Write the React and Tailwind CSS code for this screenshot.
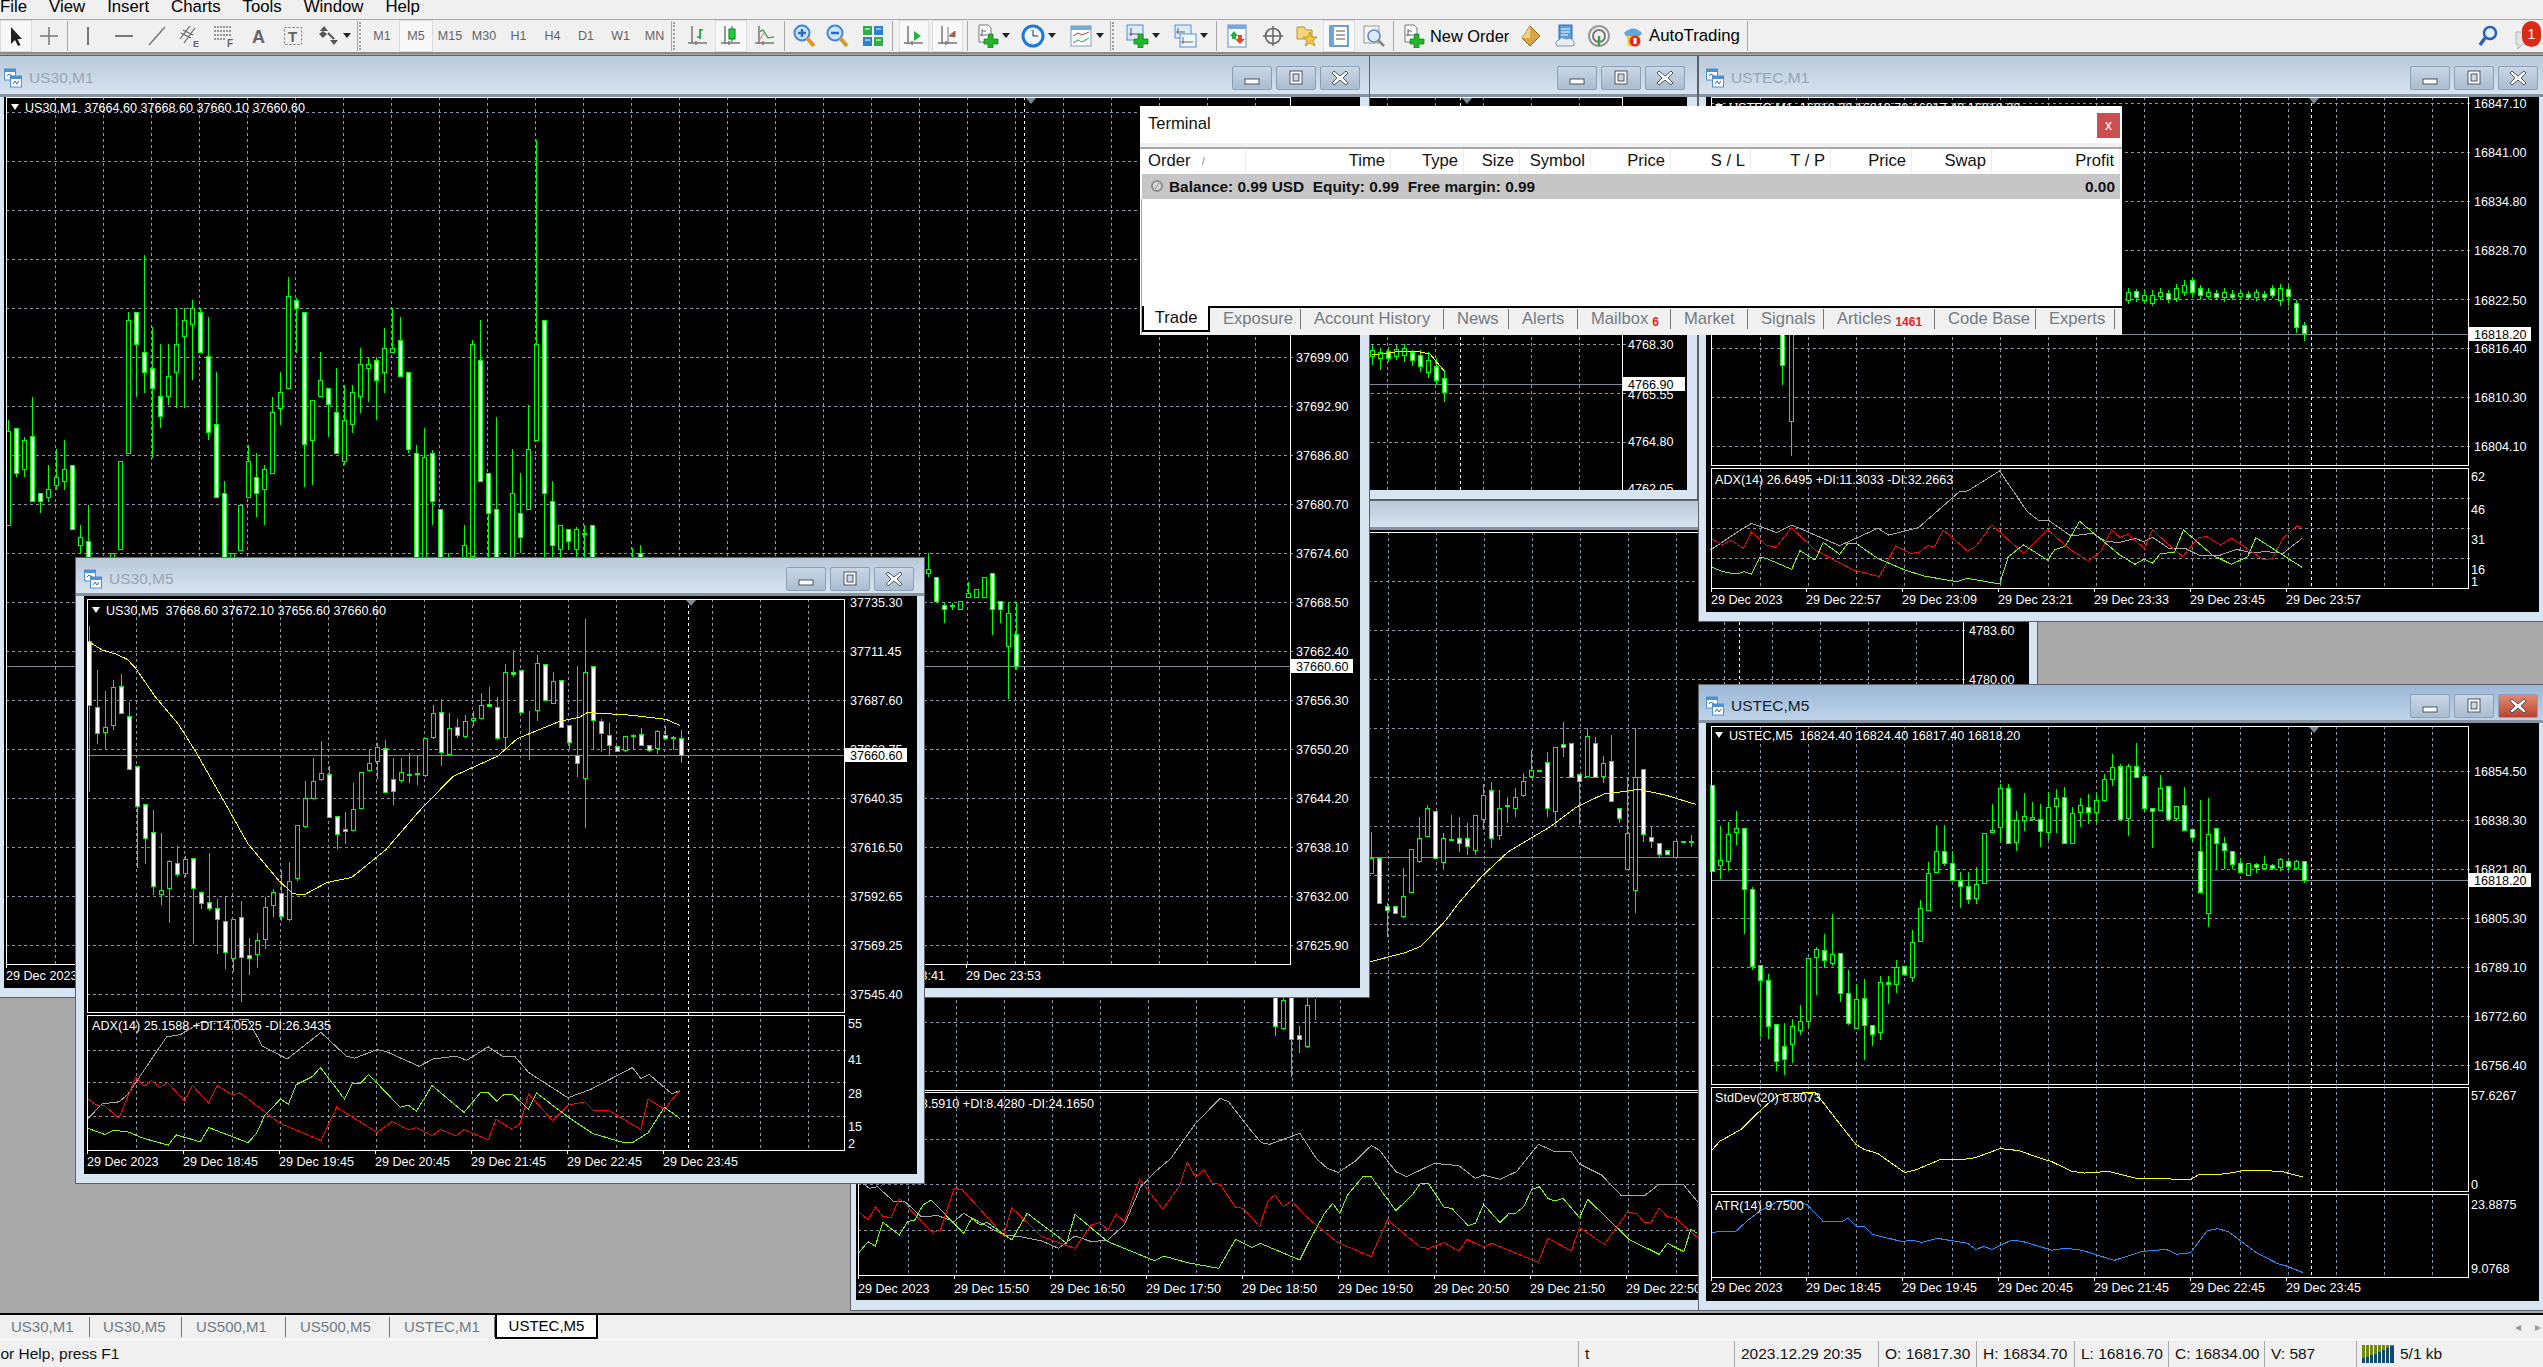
import React from 'react';

const parsePts = (s, ox, oy, fx, fy) =>
  s.split(' ').map((p) => {
    const [a, b] = p.split(',');
    return `${ox + a / fx},${oy + b / fy}`;
  }).join(' ');

function Candles({ data, x0, oy, fy, step = 8 }) {
  return data.split(' ').map((c, i) => {
    if (c === '-') return null;
    const [t, b, h, l] = c.slice(1).split(',').map((v) => oy + v / fy);
    const x = Math.round(x0 + i * step);
    return (
      <g key={i} shapeRendering="crispEdges">
        <line x1={x + 0.5} x2={x + 0.5} y1={h} y2={l} stroke="#00ff00" />
        {c[0] !== 'l' && (
          <rect x={x - 1.5} y={t} width={4} height={Math.max(b - t, 1)} stroke="#00ff00" fill={c[0] === 'w' ? '#ffffff' : '#000000'} />
        )}
      </g>
    );
  });
}

const Line = ({ pts, color }) => <polyline points={pts} fill="none" stroke={color} strokeWidth="1" shapeRendering="crispEdges" />;

function Label({ x, y, children, black }) {
  return (
    <text x={x} y={y + 4.5} className={`whitespace-pre text-[12.6px] ${black ? 'fill-black' : 'fill-white'}`}>
      {children}
    </text>
  );
}

function Chart({ box, left, right, panes, vx, hs, shift, tri, current, prices = [], times = [], timeY, notes = [], head, children }) {
  const [bx, by, bw, bh] = box;
  const top = panes[0][0];
  const bottom = panes[panes.length - 1][1];
  const xs = [];
  for (let x = vx; x < right; x += 48) xs.push(Math.round(x) + 0.5);
  return (
    <svg width={bw} height={bh} viewBox={`${bx} ${by} ${bw} ${bh}`} className="block shrink-0 bg-black">
      <g shapeRendering="crispEdges" stroke="#8c97a5" strokeDasharray="3 3">
        {xs.map((x) => <line key={x} x1={x} x2={x} y1={top} y2={bottom} />)}
        {hs.map((y) => <line key={y} x1={left} x2={right + 5} y1={y + 0.5} y2={y + 0.5} />)}
      </g>
      <line x1={shift + 0.5} x2={shift + 0.5} y1={top} y2={bottom} stroke="#ffffff" strokeDasharray="3 3" shapeRendering="crispEdges" />
      {current && <line x1={left} x2={right} y1={current[0] + 0.5} y2={current[0] + 0.5} stroke="#7c8894" shapeRendering="crispEdges" />}
      {children}
      <g shapeRendering="crispEdges" fill="none" stroke="#ffffff">
        {panes.map(([t, b]) => <rect key={t} x={left + 0.5} y={t + 0.5} width={right - left} height={b - t} />)}
        {times.map(([x]) => <line key={x} x1={x + 0.5} x2={x + 0.5} y1={bottom} y2={bottom + 4} />)}
      </g>
      {tri && <polygon points={`${tri - 5},${top + 1} ${tri + 5},${top + 1} ${tri},${top + 7}`} fill="#7c8894" />}
      {head && <polygon points={`${head[0] - 14},${head[1] - 3} ${head[0] - 6},${head[1] - 3} ${head[0] - 10},${head[1] + 3}`} fill="#ffffff" />}
      {head && <Label x={head[0]} y={head[1]}>{head[2]}</Label>}
      {notes.map(([x, y, t]) => <Label key={t} x={x} y={y}>{t}</Label>)}
      {prices.map(([y, t, x]) => <Label key={t} x={x || right + 6} y={y}>{t}</Label>)}
      {times.map(([x, t]) => <Label key={t} x={x} y={timeY}>{t}</Label>)}
      {current && current[1] && (
        <g>
          <rect x={right + 1} y={current[0] - 7} width={62} height={14} fill="#ffffff" />
          <Label x={right + 6} y={current[0]} black>{current[1]}</Label>
        </g>
      )}
    </svg>
  );
}

function WinBtn({ kind, hot }) {
  return (
    <div className={`flex h-[24px] w-[40px] items-center justify-center rounded-[2px] border border-[#8ba1b8] ${hot ? 'bg-gradient-to-b from-[#e08a72] to-[#b8432f]' : 'bg-gradient-to-b from-[#c9d7e6] to-[#aabcd0]'}`}>
      <svg width="20" height="16" viewBox="0 0 20 16">
        {kind === 'min' && <rect x="3" y="9" width="14" height="5" fill="#ffffff" stroke="#4a5560" />}
        {kind === 'max' && <g fill="none" stroke="#4a5560"><rect x="4" y="1" width="12" height="13" fill="#ffffff" /><rect x="7" y="4" width="6" height="7" fill="#c9d7e6" /></g>}
        {kind === 'close' && <path d="M4 1 L10 6 L16 1 L18 3 L13 8 L18 13 L16 15 L10 10 L4 15 L2 13 L7 8 L2 3 Z" fill="#ffffff" stroke="#4a5560" />}
      </svg>
    </div>
  );
}

function ChartIcon() {
  return (
    <svg width="18" height="20" viewBox="0 0 18 20" className="shrink-0">
      <rect x="0.5" y="1" width="11" height="11" fill="#ffffff" stroke="#4f8fd6" />
      <rect x="0.5" y="1" width="11" height="3" fill="#4f8fd6" />
      <rect x="6.5" y="8" width="11" height="11" fill="#ffffff" stroke="#4f8fd6" />
      <rect x="6.5" y="8" width="11" height="3" fill="#4f8fd6" />
      <path d="M3 8 L5 6 L8 8 M9 16 L11 13 L13 16 L15 13" fill="none" stroke="#3568a8" />
    </svg>
  );
}

function Win({ pos, title, titleH, pad, btn = 'mr-[5px]', active, children }) {
  return (
    <div className={`absolute flex flex-col border border-[#5c6068] bg-[#d7e4f1] ${pos}`}>
      <div className={`flex shrink-0 items-center justify-between border-b-[3px] border-[#8592a0] ${titleH} ${active ? 'bg-gradient-to-b from-[#9cb8d6] to-[#bdd3e9]' : 'bg-gradient-to-b from-[#b9c9d9] to-[#d7e3ef]'}`}>
        <div className={`flex items-center gap-[7px] text-[15.5px] ${pad} ${active ? 'text-[#14202c]' : 'text-[#98a6b4]'}`}>
          <ChartIcon />
          {title}
        </div>
        <div className={`flex gap-[4px] ${btn}`}>
          <WinBtn kind="min" />
          <WinBtn kind="max" />
          <WinBtn kind="close" hot={active} />
        </div>
      </div>
      <div className={pad}>{children}</div>
    </div>
  );
}

const Dd = () => <svg width="8" height="6" viewBox="0 0 8 6" className="shrink-0"><path d="M0 0 H8 L4 5 Z" fill="#222" /></svg>;
const Ico = ({ children }) => <svg width="24" height="24" viewBox="0 0 24 24" className="shrink-0">{children}</svg>;
const Axes = () => <path d="M6 2 V20 M2 19 H21 M10 17 V21" fill="none" stroke="#777" strokeWidth="1.5" />;
const Plus = () => <path d="M13 10 H18 V15 H23 V20 H18 V24 H13 V20 H9 V15 H13 Z" fill="#22b52c" stroke="#137a1a" strokeWidth="0.7" />;
const DocPlus = () => (
  <Ico>
    <path d="M4 1 H13 L16 4 V18 H4 Z" fill="#fff" stroke="#777" />
    <path d="M7 5 V12 M5 11 H12 M7 7 H11" stroke="#666" fill="none" />
    <Plus />
  </Ico>
);
const Glass = ({ plus }) => (
  <Ico>
    <circle cx="10" cy="9" r="7.5" fill="#cfe4f8" stroke="#3d86d8" strokeWidth="2" />
    <path d={plus ? 'M6 9 H14 M10 5 V13' : 'M6 9 H14'} stroke="#2a6cc0" strokeWidth="2.5" />
    <path d="M15 14 L22 22" stroke="#d99a2b" strokeWidth="4" />
  </Ico>
);

function Tool({ w, on, children }) {
  return (
    <div className={`flex h-[32px] shrink-0 items-center justify-center gap-[3px] ${w} ${on ? 'border border-[#dcdcdc] bg-[#f8f8f8]' : ''}`}>
      {children}
    </div>
  );
}
const Sep = ({ cls = '' }) => <div className={`h-[30px] w-[2px] shrink-0 border-l border-[#a8a8a8] ${cls}`} />;
const Grip = ({ w }) => <div className={`h-[28px] shrink-0 border-l-2 border-dotted border-[#a0a0a0] ${w}`} />;
const Tf = ({ w, on, children }) => <Tool w={w} on={on}><span className="text-[12.5px] text-[#666]">{children}</span></Tool>;

function Toolbar() {
  return (
    <div className="flex h-[35px] shrink-0 items-center border-y border-b-2 border-t-[#a8a8a8] border-b-[#8a8a8a] bg-[#f0f0f0] text-[16.4px] text-black">
      <Tool w="w-[32px]" on><Ico><path d="M7 3 V20 L11 16 L14 22 L16.5 21 L13.5 15 L18 15 Z" fill="#222" /></Ico></Tool>
      <Tool w="w-[34px]"><Ico><path d="M12 3 V21 M3 12 H21" stroke="#777" strokeWidth="1.5" /></Ico></Tool>
      <Sep cls="mx-px" />
      <Tool w="w-[36px]"><Ico><path d="M12 3 V21" stroke="#777" strokeWidth="2" /></Ico></Tool>
      <Tool w="w-[35px]"><Ico><path d="M3 12 H21" stroke="#777" strokeWidth="2" /></Ico></Tool>
      <Tool w="w-[32px]"><Ico><path d="M4 21 L20 3" stroke="#777" strokeWidth="1.5" /></Ico></Tool>
      <Tool w="w-[34px]"><Ico><path d="M2 15 L12 2 M6 19 L17 4 M3 9 L13 14 M5 6 L15 11" stroke="#666" strokeWidth="1.2" /><text x="15" y="23" className="text-[9px] font-bold fill-[#666]">E</text></Ico></Tool>
      <Tool w="w-[34px]"><Ico><path d="M2 3 H19 M2 7 H19 M2 11 H19 M2 15 H14" stroke="#777" strokeWidth="1.3" strokeDasharray="2 1" /><text x="15" y="23" className="text-[10px] font-bold fill-[#666]">F</text></Ico></Tool>
      <Tool w="w-[35px]"><Ico><text x="5" y="19" className="text-[18px] font-bold fill-[#666]">A</text></Ico></Tool>
      <Tool w="w-[34px]"><Ico><rect x="3.5" y="3.5" width="17" height="17" fill="none" stroke="#777" strokeDasharray="2 2" /><text x="7" y="18" className="text-[15px] font-bold fill-[#666]">T</text></Ico></Tool>
      <Tool w="w-[47px]"><Ico><path d="M8 2 L12 7 H4 Z M14 16 L18 21 L22 16 Z M3 10 L7 14 L11 10 L7 7 Z" fill="#555" /><path d="M12 9 L18 15" stroke="#555" strokeWidth="2" /></Ico><Dd /></Tool>
      <Sep />
      <Grip w="w-[6px]" />
      <Tf w="w-[34px]">M1</Tf>
      <Tf w="w-[34px]" on>M5</Tf>
      <Tf w="w-[34px]">M15</Tf>
      <Tf w="w-[34px]">M30</Tf>
      <Tf w="w-[35px]">H1</Tf>
      <Tf w="w-[33px]">H4</Tf>
      <Tf w="w-[34px]">D1</Tf>
      <Tf w="w-[35px]">W1</Tf>
      <Tf w="w-[33px]">MN</Tf>
      <Sep />
      <Grip w="w-[8px]" />
      <Tool w="w-[34px]"><Ico><Axes /><path d="M14 5 V15 M11 13 H14 M14 6 H17" stroke="#12a82a" strokeWidth="1.7" fill="none" /></Ico></Tool>
      <Tool w="w-[32px]" on><Ico><Axes /><path d="M13 2 V18" stroke="#0b7d1e" /><rect x="10" y="5" width="6" height="10" fill="#1fd03a" stroke="#0b7d1e" /></Ico></Tool>
      <Tool w="w-[36px]"><Ico><Axes /><path d="M6 8 L10 6 L15 14 L21 13" stroke="#5aa55a" strokeWidth="1.5" fill="none" /><path d="M7 15 L11 9" stroke="#c86a50" /></Ico></Tool>
      <Sep cls="mx-px" />
      <Tool w="w-[34px]"><Glass plus /></Tool>
      <Tool w="w-[32px]"><Glass /></Tool>
      <Tool w="w-[39px]"><Ico><rect x="2" y="2" width="9" height="9" fill="#2fae4a" /><rect x="13" y="2" width="9" height="9" fill="#2d7fd0" /><rect x="2" y="13" width="9" height="9" fill="#2d7fd0" /><rect x="13" y="13" width="9" height="9" fill="#2fae4a" /><path d="M4 5 H9 M15 5 H20 M4 16 H9 M15 16 H20" stroke="#fff" /></Ico></Tool>
      <Sep cls="mr-[5px]" />
      <Tool w="w-[30px]" on><Ico><Axes /><path d="M12 7 L19 12 L12 17 Z" fill="#2cae3c" /></Ico></Tool>
      <div className="w-[3px] shrink-0" />
      <Tool w="w-[31px]" on><Ico><Axes /><path d="M12 3 V20 M19 7 L13 12 L19 13 Z" stroke="#777" fill="#d2491f" strokeWidth="1" /></Ico></Tool>
      <Sep cls="ml-[4px]" />
      <Tool w="w-[46px]"><DocPlus /><Dd /></Tool>
      <Tool w="w-[47px]"><Ico><circle cx="12" cy="12" r="10" fill="#eef6ff" stroke="#1f79d0" strokeWidth="3" /><path d="M12 6 V12 H17" stroke="#333" fill="none" /></Ico><Dd /></Tool>
      <Tool w="w-[48px]"><Ico><rect x="2" y="2" width="20" height="20" fill="#fff" stroke="#7b9cc0" /><rect x="2" y="2" width="20" height="4" fill="#7aa7d8" /><path d="M4 12 L9 9 L13 11 L20 8" stroke="#c03c28" fill="none" /><path d="M4 19 L9 16 L13 18 L20 14" stroke="#2aa53a" fill="none" /></Ico><Dd /></Tool>
      <Sep />
      <Grip w="w-[8px]" />
      <Tool w="w-[45px]"><Ico><rect x="2" y="1" width="16" height="15" fill="#dceafa" stroke="#4f8fd6" /><path d="M6 4 V12 M4 10 H14" stroke="#555" /><Plus /></Ico><Dd /></Tool>
      <Tool w="w-[51px]"><Ico><rect x="2" y="1" width="16" height="13" fill="#dceafa" stroke="#4f8fd6" /><rect x="7" y="10" width="16" height="13" fill="#f2f7fd" stroke="#4f8fd6" /><path d="M5 4 V10 M3 8 H12 M10 13 V20 M8 18 H20" stroke="#666" /></Ico><Dd /></Tool>
      <Sep />
      <Tool w="w-[37px]"><Ico><rect x="3" y="1" width="18" height="22" fill="#fff" stroke="#8fb3da" strokeWidth="1.5" /><rect x="3" y="1" width="18" height="4" fill="#7aa7d8" /><path d="M9 7 L13 12 H11 V15 H7 V12 H5 Z" fill="#1fae36" /><path d="M15 20 L20 15 H17 V11 H13 V15 H10 Z" fill="#de4a24" /></Ico></Tool>
      <Tool w="w-[35px]"><Ico><circle cx="12" cy="12" r="7.5" fill="none" stroke="#666" strokeWidth="1.7" /><path d="M12 2 V22 M2 12 H22" stroke="#666" strokeWidth="1.5" /></Ico></Tool>
      <Tool w="w-[33px]"><Ico><path d="M2 3 H9 L11 6 H17 V15 H2 Z" fill="#f6d676" stroke="#b89236" /><path d="M15 8 L17 13 L22 13 L18 16.5 L20 22 L15 19 L10 22 L12 16.5 L8 13 L13 13 Z" fill="#f2c93a" stroke="#a9892a" strokeWidth="0.8" /></Ico></Tool>
      <Tool w="w-[32px]" on><Ico><rect x="3" y="2" width="18" height="20" fill="#fff" stroke="#3d80c8" strokeWidth="1.5" /><rect x="3" y="2" width="4" height="20" fill="#6ea5dd" /><path d="M9 7 H18 M9 11 H18 M9 15 H18" stroke="#555" /></Ico></Tool>
      <Tool w="w-[38px]"><Ico><rect x="2" y="2" width="15" height="17" fill="#f3f3f3" stroke="#999" /><circle cx="12" cy="12" r="6" fill="#dceafa" stroke="#5d8dc4" strokeWidth="1.7" /><path d="M16 16 L22 22" stroke="#888" strokeWidth="2.5" /></Ico></Tool>
      <Sep />
      <Tool w="w-[35px]"><DocPlus /></Tool>
      <div className="w-[82px] shrink-0 whitespace-nowrap">New Order</div>
      <Tool w="w-[36px]"><Ico><path d="M12 2 L22 12 L12 22 L4 14 Z" fill="#d7a544" stroke="#8a6418" /><path d="M12 2 L4 14 L12 14 Z" fill="#f1cf85" /></Ico></Tool>
      <Tool w="w-[34px]"><Ico><rect x="6" y="1" width="13" height="15" fill="#5b9be0" stroke="#2c6bb4" /><path d="M8 5 H17 M8 8 H17 M8 11 H15" stroke="#fff" /><path d="M4 22 Q1 17 6 16 Q8 12 13 15 Q20 13 21 19 Q22 22 19 22 Z" fill="#e8eef5" stroke="#8795a5" /></Ico></Tool>
      <Tool w="w-[34px]"><Ico><circle cx="12" cy="12" r="10" fill="none" stroke="#999" strokeWidth="2" /><circle cx="12" cy="12" r="6" fill="none" stroke="#777" strokeWidth="2" /><path d="M12 12 V22" stroke="#2cae3c" strokeWidth="2.5" /></Ico></Tool>
      <Tool w="w-[33px]"><Ico><path d="M3 9 Q12 0 21 9 L19 12 H5 Z" fill="#5fa8dd" /><path d="M6 12 H18 L17 22 H7 Z" fill="#f2c93a" /><circle cx="14" cy="17" r="5.5" fill="#e02b1c" /><rect x="12.5" y="14" width="3" height="6" fill="#fff" /></Ico></Tool>
      <div className="w-[98px] shrink-0 whitespace-nowrap text-[16.8px]">AutoTrading</div>
      <Sep />
      <div className="flex-1" />
      <svg width="22" height="24" viewBox="0 0 22 24"><circle cx="13" cy="9" r="6" fill="#e6f0fb" stroke="#2a62b8" strokeWidth="2.5" /><path d="M8 14 L3 21" stroke="#2a62b8" strokeWidth="3.5" /></svg>
      <div className="relative ml-[14px] mr-[2px] h-[30px] w-[28px]">
        <svg width="22" height="22" viewBox="0 0 22 22" className="absolute bottom-0 left-0"><path d="M3 3 H19 V15 H10 L5 20 V15 H3 Z" fill="#e4e4e4" stroke="#b5b5b5" /></svg>
        <div className="absolute right-0 top-0 flex h-[26px] w-[19px] items-center justify-center rounded-full bg-[#d92a14] text-[14px] text-white">1</div>
      </div>
    </div>
  );
}

const CANDLES_A =
  'h995,1275,960,1275 w985,1120,985,1130 h1020,1108,1010,1130 w1010,1205,890,1205 w1180,1205,1180,1240 h1168,1192,1095,1205 h1132,1156,1048,1170 h1108,1144,1020,1170 w1097,1288,1097,1290 h1312,1336,1275,1360 w1324,1400,1215,1400 - - h1360,1400,1360,1400 h1085,1348,1085,1348 h660,1060,636,1060 w636,733,636,890 w757,817,465,880 w805,865,680,1075 w889,949,732,985 h829,889,732,915 h733,817,625,925 h661,709,625,925 h625,673,600,840 w637,757,625,757 w769,997,650,1020 w973,1192,815,1192 w1180,1400,1143,1400 h1360,1400,1360,1400 h1215,1350,1215,1350 h1084,1192,1035,1192 w1132,1180,1060,1250 h1108,1168,1095,1275 h937,1120,890,1120 h877,925,815,975 h589,865,530,865 w601,625,595,760 w637,1033,637,1160 h901,1021,901,1155 h841,889,755,890 w865,913,865,1010 w937,1060,805,1060 h961,1084,855,1095 h877,973,855,1000 h793,889,745,940 h793,805,775,905 w781,841,770,960 h745,817,685,880 h745,757,625,760 w721,829,650,830 w817,1048,817,1060 w1060,1400,1035,1400 h1072,1400,985,1400 w1060,1205,1050,1275 w1228,1400,1228,1400 l0,0,1360,1400 - h1336,1400,1275,1400 h733,1370,720,1400 w781,1145,660,1145 w1120,1240,1120,1370 w1228,1400,950,1400 - h1180,1400,1048,1400 w1240,1312,1120,1360 h1048,1228,915,1228 h733,1021,120,1021 w660,1180,660,1400 w1204,1336,1143,1370 h1276,1348,1276,1400 w1288,1324,1288,1350 h1288,1348,1280,1400 w1300,1302,1275,1400 w1276,1400,1276,1400 - - - - l0,0,1345,1370 w1360,1400,1335,1400';
const CANDLES_A2 = 'h88,100,40,110 w112,185,112,190 w196,208,185,250 w196,198,190,210 h185,208,185,210 h160,172,125,175 h148,172,148,175 h112,172,112,175 w100,208,100,285 w185,208,185,250 h220,320,185,478 w284,380,185,390';

const CANDLES_F =
  'w225,380,185,592 w385,450,295,475 h435,447,345,490 h337,430,318,440 w335,400,305,400 w408,537,372,540 w530,628,530,780 w623,706,623,770 w692,824,637,845 h835,845,693,870 h762,830,760,915 w768,796,725,800 h758,792,750,800 w756,830,756,965 w838,865,835,880 w863,878,742,885 w878,905,855,990 w910,985,850,1027 h905,1000,905,1035 w900,998,860,1108 w993,1002,950,1042 h956,990,938,1025 h876,955,850,977 h838,871,830,900 w842,898,783,910 h813,905,765,910 h675,805,675,810 h610,678,567,680 h567,608,510,610 h547,563,468,567 w550,655,530,655 w653,698,653,733 w685,690,642,720 h636,686,570,688 h545,633,545,633 h523,540,490,545 h485,518,472,560 w487,593,465,595 w562,592,510,625 h545,565,510,570 h550,552,497,570 h548,550,505,575 h462,552,462,555 h400,460,380,462 w398,497,365,530 h437,500,400,502 w435,455,415,460 h420,457,405,460 h414,418,395,430 h381,412,350,415 w378,383,335,385 w387,462,360,465 h300,460,280,487 w300,305,245,310 w295,397,295,400 l0,0,395,515 h278,393,258,420 w280,368,280,370 h322,375,300,376 w320,435,320,435 w430,472,430,487 w503,523,285,555 h300,560,170,680 w285,418,285,490 w420,450,415,495 w455,480,425,505 w482,493,480,495 h458,492,455,495 w454,458,452,490 w452,478,437,480 w480,490,478,495 h445,487,442,500 w455,462,430,465 w459,463,455,490 w462,503,442,522';

const CANDLES_E =
  'w258,468,258,468 h441,455,358,488 h378,445,347,467 h363,374,321,404 w365,513,365,622 w514,703,507,710 w700,735,698,875 w735,848,720,880 w845,935,845,958 w898,930,840,968 h848,893,830,938 h836,858,797,870 h682,836,680,850 h660,680,655,772 w662,687,622,705 h672,695,573,700 w670,768,670,790 w768,842,710,845 h782,853,745,855 w780,846,733,932 w846,868,846,897 h740,863,725,882 w740,745,725,795 h704,745,685,768 w703,722,700,725 h643,730,613,740 h560,640,538,640 h474,565,446,565 h420,472,355,472 w421,450,355,455 w450,490,420,490 w490,505,470,558 w506,537,470,550 h500,535,458,548 h375,498,375,498 h368,374,305,374 h265,362,255,395 w266,400,255,402 h345,398,320,420 h335,343,278,370 h337,342,300,345 w342,370,305,408 h312,374,275,393 h290,310,268,375 w288,400,262,400 h328,400,310,400 h308,324,290,360 w312,324,280,352 h294,325,280,350 h243,295,230,298 h214,243,182,260 w212,342,205,345 h212,340,205,382 w212,238,155,240 w237,314,237,320 w315,321,315,412 h266,320,232,320 w262,342,260,345 h310,340,310,345 w308,368,262,370 w367,385,367,398 w421,520,295,525 h378,572,290,604 w365,400,365,462 w400,418,385,462 w421,452,421,462 w450,472,435,475 h450,478,450,480 w452,460,448,472 h452,462,430,465 w455,463,452,465 h440,460,435,468 w445,458,442,465 h445,461,442,465 w445,490,445,497';

const CANDLES_C =
  'h955,1000,875,1000 w955,1090,955,1090 w1098,1112,1090,1190 w1098,1120,1098,1120 h1070,1130,985,1135 h928,1058,928,1058 h895,965,830,970 h805,888,795,890 w815,955,815,955 h895,968,880,990 h897,899,825,900 w895,910,830,935 w895,918,850,945 h827,930,825,945 h766,838,732,870 w750,895,725,925 h805,887,750,900 h795,797,770,850 h772,805,745,830 h725,767,700,770 h692,710,630,700 h690,692,690,692 w668,805,635,830 h622,815,620,860 w612,622,547,650 w610,712,610,715 w703,723,703,855 h590,710,565,710 w610,712,590,712 h670,708,648,730 w665,785,585,785 w805,835,805,850 h880,988,715,990 h712,1050,565,1120 w688,882,688,905 w893,905,860,925 w910,943,910,950 w930,943,930,945 h905,952,905,955 h905,908,905,910 h903,905,885,920';
const CANDLES_C2 = 'w0,200,0,228 h122,205,0,210 w0,238,0,350 w226,238,197,280 h135,260,0,265 l0,0,118,180';
const CANDLES_B = 'h350,356,345,365 h352,358,348,370 w351,358,347,362 h349,356,345,360 h348,355,344,362 w352,360,350,366 w355,366,350,372 h360,372,352,378 w366,380,358,385 w378,392,370,402';
const CANDLES_D = 'h292,300,288,304 w291,297,289,302 h295,300,290,303 h295,303,290,306 h292,296,288,300 w293,299,290,303 h288,298,284,302 h285,292,280,296 w280,292,277,297 w288,295,285,300 h292,296,288,299 w293,297,290,300 h292,297,288,302 w294,297,290,300 h293,296,290,299 w294,297,291,300 h292,297,289,301 w294,297,291,301 w288,295,285,298 h288,300,284,306 w289,296,286,306 w303,327,300,333 w325,333,322,341';

const F = {
  ma: '52,225 75,245 100,255 120,268 135,290 170,360 210,425 240,490 290,610 335,720 390,810 415,842 435,845 475,815 520,802 580,735 640,640 700,555 780,505 815,462 890,420 925,410 940,398 1020,405 1080,415 1105,430',
  gray: '50,1393 75,1357 105,1352 120,1335 190,1193 215,1187 250,1158 335,1150 360,1215 405,1247 465,1182 510,1240 525,1245 565,1224 580,1228 640,1265 665,1247 705,1240 725,1250 763,1217 790,1242 810,1240 835,1280 905,1342 945,1322 1020,1268 1035,1295 1050,1285 1090,1332 1105,1325',
  red: '50,1345 65,1360 78,1360 105,1392 135,1292 150,1313 163,1300 178,1317 192,1305 222,1350 236,1312 265,1355 280,1312 307,1335 321,1330 390,1403 465,1447 493,1365 565,1427 592,1400 621,1420 635,1415 663,1435 678,1420 706,1435 720,1420 763,1445 777,1395 806,1420 820,1405 835,1333 878,1398 906,1360 935,1352 950,1372 978,1373 1035,1420 1048,1345 1077,1370 1105,1323',
  green: '50,1417 80,1432 95,1422 120,1425 150,1442 193,1458 207,1433 250,1450 265,1415 335,1452 350,1430 365,1385 393,1345 407,1358 421,1310 450,1290 464,1268 507,1345 521,1307 535,1307 550,1285 606,1365 621,1360 635,1375 663,1312 720,1378 749,1330 763,1330 778,1350 792,1333 806,1333 835,1370 849,1330 906,1390 950,1430 1005,1452 1020,1452 1048,1428 1077,1365 1105,1393',
};
const D = {
  gray: '38,750 88,695 113,670 160,698 187,675 275,737 345,685 365,705 420,683 495,575 510,573 569,513 620,635 640,660 658,660 700,708 740,700 765,725 790,727 818,715 834,725 850,712 880,745 910,745 935,765 975,765 1005,748 1030,758 1060,755 1090,760 1125,715',
  red: '38,715 60,735 75,720 98,745 113,695 140,735 158,742 187,683 230,750 300,810 348,830 378,737 405,760 420,758 437,737 450,740 465,690 510,752 525,740 555,675 613,760 657,688 700,750 732,782 755,755 775,690 790,712 805,703 835,745 850,690 905,770 935,712 950,710 975,735 995,715 1010,730 1055,780 1070,775 1090,715 1115,678 1125,682',
  green: '38,800 60,815 85,822 100,815 113,823 128,772 140,775 187,808 202,752 230,780 245,727 275,763 290,730 305,730 345,775 395,810 430,828 490,845 510,835 569,852 585,770 613,735 657,780 670,750 690,738 716,664 790,765 818,793 835,777 850,790 865,760 890,758 907,690 960,765 995,793 1025,770 1040,713 1125,802',
};
const E = {
  sd: '38,1155 55,1130 95,1100 125,1060 150,1030 165,1015 230,1010 265,1070 305,1138 320,1150 345,1160 395,1207 415,1200 460,1175 500,1175 525,1170 570,1148 605,1153 640,1170 665,1180 700,1203 725,1208 770,1204 820,1221 870,1222 920,1224 935,1212 985,1210 1020,1201 1060,1202 1090,1205 1127,1218',
  atr: '38,1353 85,1350 105,1325 130,1300 160,1278 185,1275 215,1285 245,1327 280,1327 290,1318 305,1338 320,1338 335,1358 390,1376 410,1372 425,1378 455,1368 510,1380 525,1395 540,1388 555,1395 590,1373 610,1375 665,1397 690,1392 720,1397 780,1422 830,1400 875,1395 895,1407 920,1403 950,1350 970,1344 990,1352 1040,1402 1080,1430 1095,1435 1127,1452',
};
const C = {
  ma: '615,1265 660,1238 680,1220 710,1150 730,1090 760,1010 795,935 850,860 885,800 920,762 945,755 965,748 1000,765 1040,793',
  gray: '15,660 35,685 50,680 80,725 100,725 130,770 160,767 190,785 207,760 240,790 280,825 310,830 350,843 380,865 410,828 440,845 470,840 500,795 530,680 560,630 585,595 630,490 675,415 690,425 730,510 750,548 765,553 820,520 850,595 870,625 890,637 920,605 950,557 965,570 995,635 1015,650 1065,610 1110,617 1140,655 1155,645 1185,658 1215,635 1255,553 1285,575 1315,575 1330,612 1370,645 1405,705 1450,705 1475,673 1520,675 1545,725',
  red: '15,755 33,780 46,740 60,770 75,772 90,715 150,817 165,810 190,685 205,690 280,825 295,743 350,830 410,865 440,795 455,788 470,810 485,762 500,785 528,658 570,747 600,680 615,607 630,652 645,628 660,670 675,673 703,742 717,745 747,800 762,722 775,705 790,740 805,722 835,775 890,848 950,890 980,780 1040,862 1055,865 1083,848 1110,873 1125,838 1155,862 1170,850 1255,907 1272,835 1315,872 1330,803 1375,853 1418,755 1435,762 1448,787 1460,787 1475,745 1490,770 1505,775 1545,833',
  green: '15,880 33,845 46,858 60,787 90,825 105,785 118,780 133,735 148,720 207,820 222,775 237,795 250,787 295,840 323,760 395,850 410,763 470,845 555,902 572,888 615,908 672,925 703,838 733,863 748,850 820,900 835,850 865,760 880,730 893,760 907,705 935,650 950,650 995,752 1025,705 1040,670 1055,672 1083,742 1097,745 1127,797 1140,790 1155,733 1185,788 1200,762 1213,760 1228,740 1243,688 1257,680 1272,715 1285,723 1300,715 1330,773 1345,718 1420,838 1475,883 1490,850 1520,875 1533,808 1545,820',
};

const steps = (from, to, step = 49) => {
  const out = [];
  for (let y = from; y <= to; y += step) out.push(y);
  return out;
};

const terminalCols = [
  ['w-[104px]', 'Order'], ['w-[145px]', 'Time'], ['w-[73px]', 'Type'], ['w-[56px]', 'Size'], ['w-[71px]', 'Symbol'], ['w-[80px]', 'Price'],
  ['w-[80px]', 'S / L'], ['w-[80px]', 'T / P'], ['w-[81px]', 'Price'], ['w-[80px]', 'Swap'], ['w-[128px]', 'Profit'],
];
const terminalTabs = [
  ['w-[91px]', 'Exposure'], ['w-[143px]', 'Account History'], ['w-[65px]', 'News'], ['w-[69px]', 'Alerts'], ['w-[93px]', 'Mailbox', '6'], ['w-[77px]', 'Market'],
  ['w-[76px]', 'Signals'], ['w-[111px]', 'Articles', '1461'], ['w-[101px]', 'Code Base'], ['w-[79px]', 'Experts'],
];

function Terminal() {
  return (
    <div className="absolute left-[1140px] top-[52px] flex h-[229px] w-[982px] flex-col bg-white text-[16.6px] text-[#111]">
      <div className="flex h-[37px] shrink-0 items-center justify-between pl-[8px] pr-[2px]">
        <span>Terminal</span>
        <div className="mt-[2px] flex h-[25px] w-[23px] items-center justify-center bg-[#c9504f] text-[14px] text-white">x</div>
      </div>
      <div className="h-[4px] shrink-0 bg-[#f0f0f0]" />
      <div className="flex h-[27px] shrink-0 border-t-2 border-[#a8a8a8] pl-[2px]">
        {terminalCols.map(([w, t], i) => (
          <div key={i} className={`flex items-center border-r border-[#ececec] pr-[5px] ${w} ${i === 0 ? 'relative justify-start pl-[6px]' : 'justify-end'}`}>
            {t}
            {i === 0 && <span className="absolute left-[60px] text-[10px] text-[#777]">/</span>}
          </div>
        ))}
      </div>
      <div className="ml-[2px] mr-[2px] flex h-[25px] shrink-0 items-center justify-between whitespace-pre bg-[#c6c6c6] pl-[8px] pr-[5px] text-[15.4px] font-bold">
        <div className="flex items-center gap-[5px]">
          <svg width="14" height="14" viewBox="0 0 14 14"><circle cx="7" cy="7" r="5" fill="#d8d8d8" stroke="#8e8e8e" strokeWidth="2" /><path d="M5 10 L9 4" stroke="#8e8e8e" /></svg>
          Balance: 0.99 USD  Equity: 0.99  Free margin: 0.99
        </div>
        <span>0.00</span>
      </div>
      <div className="ml-[1px] flex-1 border-l border-[#a8a8a8]" />
      <div className="ml-[1px] flex h-[29px] shrink-0 border-l border-[#a8a8a8] bg-[#f0f0f0]">
        <div className="flex h-[26px] w-[68px] shrink-0 items-center justify-center border-x-2 border-b-2 border-black bg-white">Trade</div>
        <div className="flex flex-1 items-start border-t-2 border-black pt-px">
          {terminalTabs.map(([w, t, n]) => (
            <div key={t} className={`flex h-[20px] items-center whitespace-nowrap border-r border-[#777] pl-[13px] text-[#737b83] ${w}`}>
              {t}
              {n && <span className="ml-[4px] mt-[6px] text-[12px] font-bold text-[#e8202a]">{n}</span>}
            </div>
          ))}
        </div>
      </div>
    </div>
  );
}

const chartTabs = [
  ['w-[90px] pl-[11px]', 'US30,M1'], ['w-[92px] pl-[13px]', 'US30,M5'], ['w-[104px] pl-[14px]', 'US500,M1'], ['w-[104px] pl-[14px]', 'US500,M5'], ['w-[105px] pl-[14px]', 'USTEC,M1'],
];
const statusCells = [
  ['w-[156px]', 't'], ['w-[144px]', '2023.12.29 20:35'], ['w-[98px]', 'O: 16817.30'], ['w-[98px]', 'H: 16834.70'], ['w-[94px]', 'L: 16816.70'], ['w-[96px]', 'C: 16834.00'], ['w-[92px]', 'V: 587'],
];

export default function App() {
  return (
    <div className="flex h-[1367px] w-[2543px] flex-col overflow-hidden bg-[#f0f0f0] font-['Liberation_Sans',Arial,sans-serif]">
      <div className="flex h-[19px] shrink-0 gap-[22px] overflow-hidden text-[16.8px] leading-[17px] text-black">
        {['File', 'View', 'Insert', 'Charts', 'Tools', 'Window', 'Help'].map((m) => (
          <span key={m} className="-mt-[2px]">{m}</span>
        ))}
      </div>
      <Toolbar />

      <div className="relative h-[1259px] shrink-0 overflow-hidden bg-[#a9a9a9]">
        <Win pos="left-[850px] top-[446px] w-[1188px] h-[811px]" title="US500,M5" titleH="h-[29px]" pad="pl-[5px]" btn="mr-[10px]">
          <Chart box={[856, 530, 1173, 770]} left={858} right={1963} panes={[[532, 1090], [1092, 1275]]} vx={907.6} hs={[...steps(581, 1071), 1139, 1184, 1230]} shift={1739} current={[857, '']}
            prices={[[630, '4783.60'], [679, '4780.00']]} timeY={1288}
            times={[[858, '29 Dec 2023'], [954, '29 Dec 15:50'], [1050, '29 Dec 16:50'], [1146, '29 Dec 17:50'], [1242, '29 Dec 18:50'], [1338, '29 Dec 19:50'], [1434, '29 Dec 20:50'], [1530, '29 Dec 21:50'], [1626, '29 Dec 22:50']]}
            notes={[[862, 1103, 'ADX(14) 38.5910 +DI:8.4280 -DI:24.1650']]}>
            <Candles data={CANDLES_C} x0={1370.5} oy={540} fy={3} />
            <Candles data={CANDLES_C2} x0={1275} oy={960} fy={3} />
            <Line pts={parsePts(C.ma, 900, 540, 1.307, 3)} color="#ffff00" />
            <Line pts={parsePts(C.gray, 850, 960, 1.823, 3)} color="#a8a8a8" />
            <Line pts={parsePts(C.red, 850, 960, 1.823, 3)} color="#ff0000" />
            <Line pts={parsePts(C.green, 850, 960, 1.823, 3)} color="#7cfc00" />
          </Chart>
        </Win>

        <Win pos="left-[1000px] top-[1px] w-[698px] h-[445px]" title="US500,M1" titleH="h-[41px] pt-[5px]" pad="pl-[4px]" btn="mr-[12px]">
          <Chart box={[1005, 97, 682, 393]} left={1005} right={1622} panes={[[97, 490]]} vx={1051} hs={steps(344, 490)} shift={1460} tri={1467} current={[384, '4766.90']}
            prices={[[344, '4768.30'], [394, '4765.55'], [441, '4764.80'], [488, '4762.05']]}>
            <Candles data={CANDLES_B} x0={1372} oy={0} fy={1} />
            <Line pts="1372,355 1395,352 1415,351 1430,354 1445,372" color="#ffff00" />
          </Chart>
        </Win>

        <Win pos="-left-[2px] top-[1px] w-[1372px] h-[943px]" title="US30,M1" titleH="h-[41px] pt-[5px]" pad="pl-[5px]" btn="mr-[9px]">
          <Chart box={[4, 97, 1356, 891]} left={6} right={1290} panes={[[97, 964]]} vx={55} hs={steps(112, 945)} shift={1024} tri={1031} current={[666, '37660.60']}
            head={[25, 107, 'US30,M1  37664.60 37668.60 37660.10 37660.60']} timeY={975}
            prices={[[357, '37699.00'], [406, '37692.90'], [455, '37686.80'], [504, '37680.70'], [553, '37674.60'], [602, '37668.50'], [651, '37662.40'], [700, '37656.30'], [749, '37650.20'], [798, '37644.20'], [847, '37638.10'], [896, '37632.00'], [945, '37625.90']]}
            times={[[6, '29 Dec 2023'], [870, '29 Dec 23:41'], [966, '29 Dec 23:53']]}>
            <Candles data={CANDLES_A} x0={7.65} oy={100} fy={3} />
            <Candles data={CANDLES_A2} x0={927.6} oy={540} fy={3} />
          </Chart>
        </Win>

        <Win pos="left-[1698px] top-[1px] w-[846px] h-[567px]" title="USTEC,M1" titleH="h-[41px] pt-[5px]" pad="pl-[7px]">
          <Chart box={[1706, 97, 833, 515]} left={1711} right={2468} panes={[[97, 465], [468, 588]]} vx={1760} hs={[...steps(103, 446), 498, 528, 558]} shift={2311} tri={2314} current={[334, '16818.20']}
            head={[1729, 107, 'USTEC,M1  16818.20 16819.70 16817.40 16818.20']} timeY={599}
            prices={[[103, '16847.10'], [152, '16841.00'], [201, '16834.80'], [250, '16828.70'], [300, '16822.50'], [348, '16816.40'], [397, '16810.30'], [446, '16804.10'], [476, '62', 2471], [509, '46', 2471], [539, '31', 2471], [569, '16', 2471], [581, '1', 2471]]}
            times={[[1711, '29 Dec 2023'], [1806, '29 Dec 22:57'], [1902, '29 Dec 23:09'], [1998, '29 Dec 23:21'], [2094, '29 Dec 23:33'], [2190, '29 Dec 23:45'], [2286, '29 Dec 23:57']]}
            notes={[[1715, 479, 'ADX(14) 26.6495 +DI:11.3033 -DI:32.2663']]}>
            <Candles data="w300,365,300,385 h300,421,300,456" x0={1782} oy={0} fy={1} step={9} />
            <Candles data={CANDLES_D} x0={2128} oy={0} fy={1} />
            <Line pts={parsePts(D.gray, 1690, 300, 1.838, 3)} color="#a8a8a8" />
            <Line pts={parsePts(D.red, 1690, 300, 1.838, 3)} color="#ff0000" />
            <Line pts={parsePts(D.green, 1690, 300, 1.838, 3)} color="#7cfc00" />
          </Chart>
        </Win>

        <Win pos="left-[75px] top-[503px] w-[850px] h-[627px]" title="US30,M5" titleH="h-[38px] pt-[7px]" pad="pl-[8px]" btn="mr-[10px]">
          <Chart box={[84, 596, 833, 578]} left={87} right={844} panes={[[599, 1012], [1015, 1150]]} vx={136} hs={[...steps(651, 994), 1050, 1082, 1116]} shift={688} tri={691} current={[755, '37660.60']}
            head={[106, 610, 'US30,M5  37668.60 37672.10 37656.60 37660.60']} timeY={1161}
            prices={[[602, '37735.30'], [651, '37711.45'], [700, '37687.60'], [749, '37663.75'], [798, '37640.35'], [847, '37616.50'], [896, '37592.65'], [945, '37569.25'], [994, '37545.40'], [1023, '55', 848], [1059, '41', 848], [1093, '28', 848], [1126, '15', 848], [1143, '2', 848]]}
            times={[[87, '29 Dec 2023'], [183, '29 Dec 18:45'], [279, '29 Dec 19:45'], [375, '29 Dec 20:45'], [471, '29 Dec 21:45'], [567, '29 Dec 22:45'], [663, '29 Dec 23:45']]}
            notes={[[92, 1025, 'ADX(14) 25.1588 +DI:14.0525 -DI:26.3435']]}>
            <Candles data={CANDLES_F} x0={89} oy={550} fy={2.45} />
            <Line pts={parsePts(F.ma, 60, 550, 1.782, 2.45)} color="#ffff00" />
            <Line pts={parsePts(F.gray, 60, 550, 1.782, 2.45)} color="#a8a8a8" />
            <Line pts={parsePts(F.red, 60, 550, 1.782, 2.45)} color="#ff0000" />
            <Line pts={parsePts(F.green, 60, 550, 1.782, 2.45)} color="#7cfc00" />
          </Chart>
        </Win>

        <Win pos="left-[1698px] top-[630px] w-[846px] h-[627px]" title="USTEC,M5" titleH="h-[38px] pt-[7px]" pad="pl-[7px]" active>
          <Chart box={[1706, 723, 833, 578]} left={1711} right={2468} panes={[[726, 1084], [1087, 1191], [1194, 1277]]} vx={1760} hs={steps(771, 1065)} shift={2311} tri={2314} current={[880, '16818.20']}
            head={[1729, 735, 'USTEC,M5  16824.40 16824.40 16817.40 16818.20']} timeY={1287}
            prices={[[771, '16854.50'], [820, '16838.30'], [869, '16821.80'], [918, '16805.30'], [967, '16789.10'], [1016, '16772.60'], [1065, '16756.40'], [1095, '57.6267', 2471], [1184, '0', 2471], [1204, '23.8875', 2471], [1268, '9.0768', 2471]]}
            times={[[1711, '29 Dec 2023'], [1806, '29 Dec 18:45'], [1902, '29 Dec 19:45'], [1998, '29 Dec 20:45'], [2094, '29 Dec 21:45'], [2190, '29 Dec 22:45'], [2286, '29 Dec 23:45']]}
            notes={[[1715, 1097, 'StdDev(20) 8.8073'], [1715, 1205, 'ATR(14) 9.7500']]}>
            <Candles data={CANDLES_E} x0={1711.8} oy={680} fy={2.45} />
            <Line pts={parsePts(E.sd, 1690, 680, 1.838, 2.45)} color="#ffff00" />
            <Line pts={parsePts(E.atr, 1690, 680, 1.838, 2.45)} color="#1e90ff" />
          </Chart>
        </Win>

        <Terminal />
      </div>

      <div className="flex h-[26px] shrink-0 items-stretch border-t-2 border-black bg-[#f0f0f0] text-[15px]">
        {chartTabs.map(([w, t]) => (
          <div key={t} className={`flex h-[20px] items-center self-center border-r border-[#777] text-[#6f7a85] ${w}`}>{t}</div>
        ))}
        <div className="flex h-[24px] w-[103px] items-center justify-center border-x-2 border-b-2 border-black bg-white text-black">USTEC,M5</div>
        <div className="ml-auto mr-[2px] flex items-center gap-[14px] text-[12px] text-[#999]">
          <span>◂</span>
          <span>▸</span>
        </div>
      </div>

      <div className="flex flex-1 items-center border-t border-white bg-[#f0f0f0] text-[15.5px] text-[#111]">
        <div className="w-[1578px] shrink-0 overflow-hidden">
          <div className="-ml-[9px]">For Help, press F1</div>
        </div>
        {statusCells.map(([w, t]) => (
          <div key={t} className={`flex h-[26px] shrink-0 items-center border-l border-[#a8a8a8] pl-[6px] ${w}`}>{t}</div>
        ))}
        <div className="flex h-[26px] flex-1 items-center gap-[6px] border-l border-[#a8a8a8] pl-[5px]">
          <svg width="32" height="18" viewBox="0 0 32 18">
            <rect width="32" height="18" fill="#6f8a12" />
            <path d="M0 18 V13 H4 V12 H8 V10 H12 V9 H16 V7 H20 V5 H24 V3 H28 V1 H32 V18 Z" fill="#12496e" />
            <path d="M3.5 0 V18 M7.5 0 V18 M11.5 0 V18 M15.5 0 V18 M19.5 0 V18 M23.5 0 V18 M27.5 0 V18" stroke="#f0f0f0" strokeWidth="1" />
          </svg>
          5/1 kb
        </div>
      </div>
    </div>
  );
}
